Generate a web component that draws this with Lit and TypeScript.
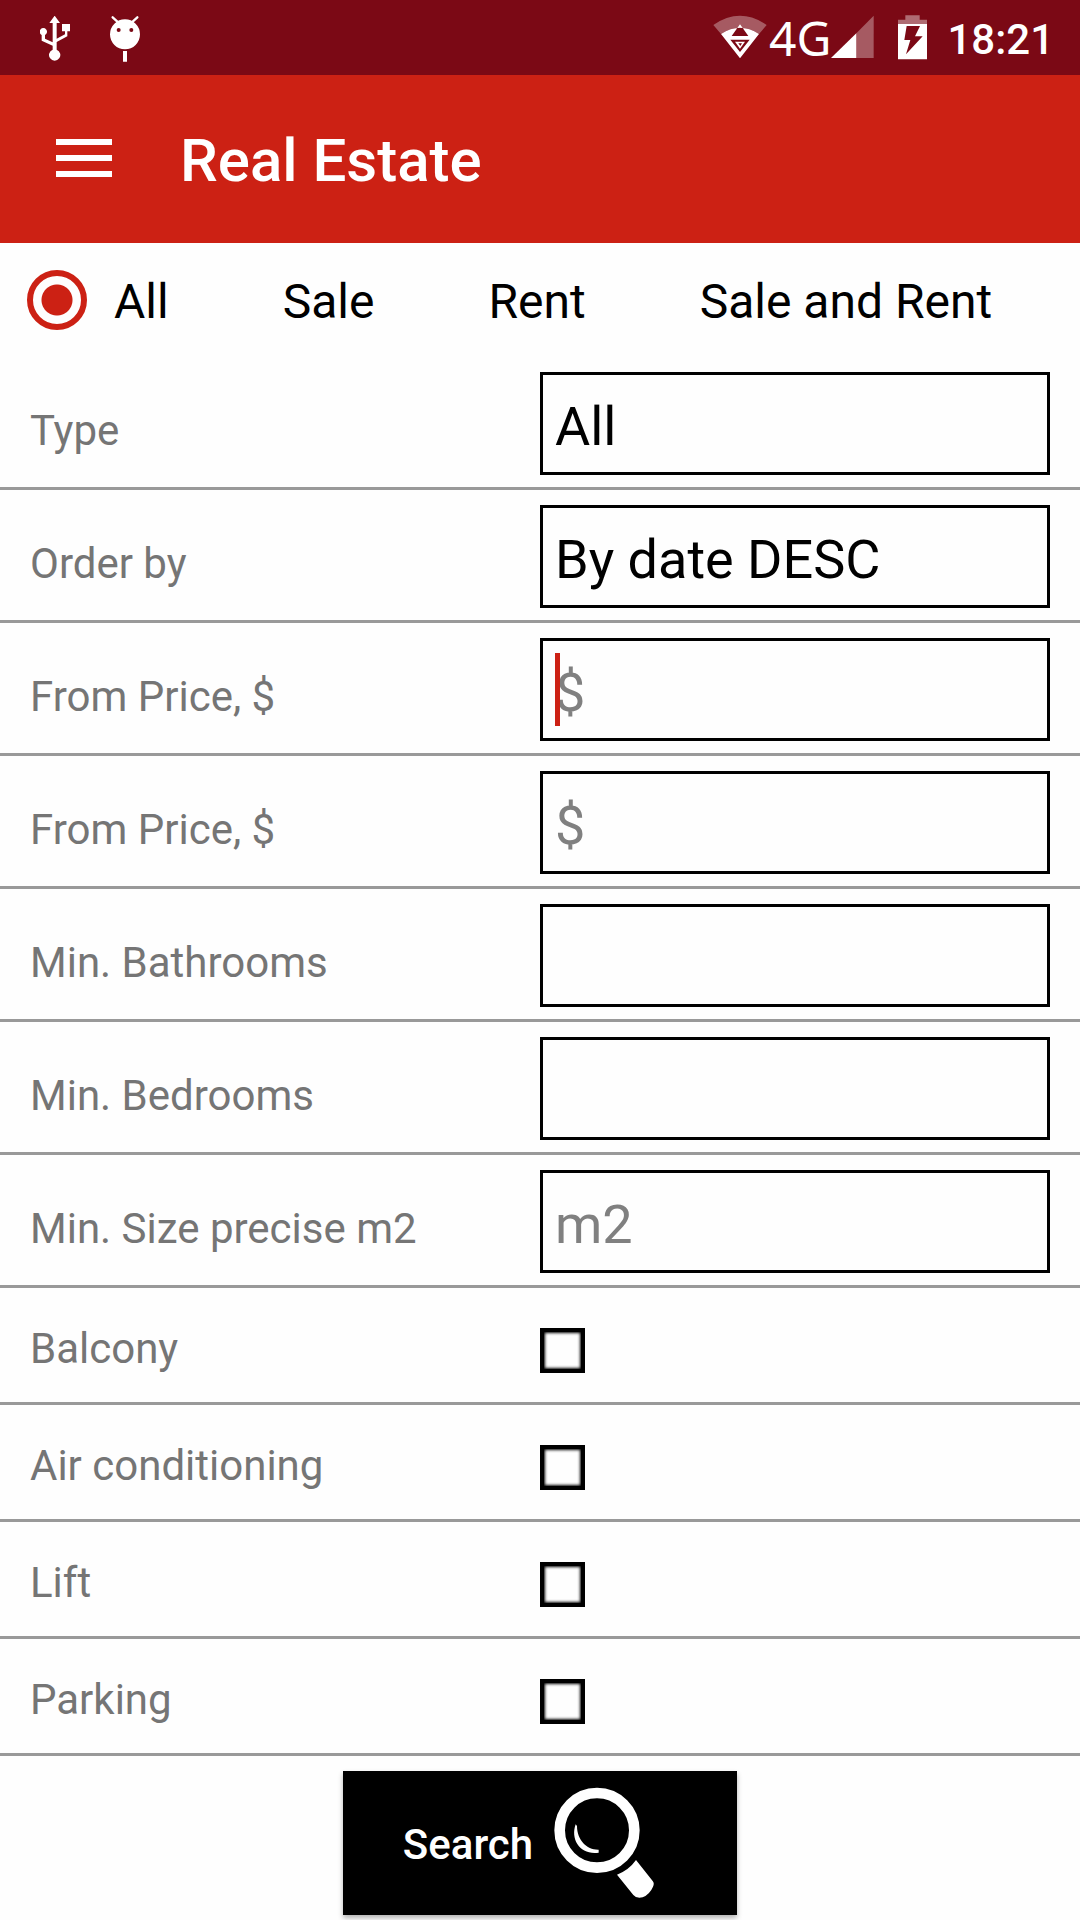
import { LitElement, html, css, nothing } from "lit";
import { customElement } from "lit/decorators.js";

interface Field {
  id: string;
  label: string;
  options?: string[];
  placeholder?: string;
  caret?: boolean;
}

const LISTINGS = ["All", "Sale", "Rent", "Sale and Rent"];

const FIELDS: Field[] = [
  { id: "type", label: "Type", options: ["All"] },
  { id: "order", label: "Order by", options: ["By date DESC"] },
  { id: "price-from", label: "From Price, $", placeholder: "$", caret: true },
  { id: "price-to", label: "From Price, $", placeholder: "$" },
  { id: "bathrooms", label: "Min. Bathrooms" },
  { id: "bedrooms", label: "Min. Bedrooms" },
  { id: "size", label: "Min. Size precise m2", placeholder: "m2" },
];

const AMENITIES = ["Balcony", "Air conditioning", "Lift", "Parking"];

@customElement("status-bar")
class StatusBar extends LitElement {
  static styles = css`
    :host {
      display: flex;
      align-items: center;
      justify-content: space-between;
      height: 75px;
      padding: 0 26px 0 40px;
      background: #7b0915;
      color: #fff;
      font-family: Roboto, sans-serif;
    }
    svg {
      display: block;
      flex: none;
      fill: #fff;
    }
    .group {
      display: flex;
      align-items: center;
    }
    .left {
      gap: 38px;
      padding-top: 2px;
    }
    .network {
      font: 400 48px/60px "Noto Sans", sans-serif;
      margin-left: 2px;
    }
    .battery {
      margin-left: 24px;
    }
    .time {
      margin-left: 20px;
      padding-top: 4px;
      font-size: 42px;
      font-weight: 500;
      line-height: 50px;
    }
  `;

  render() {
    return html`
      <div class="group left">
        <svg width="31" height="45" viewBox="121 48 93 135" aria-label="USB">
          <path d="M165 47l16 22h-10v47l25-13v-9h-9V72h24v22h-8v15l-32 17v23a17 17 0 1 1-12 0v-12l-33-15v-17a11 11 0 1 1 10 0v11l23 11V69h-10z" />
        </svg>
        <svg width="32" height="46" viewBox="330 46 96 138" aria-label="Debugging">
          <path d="M341 50l14 13M415 50l-14 13" fill="none" stroke="#fff" stroke-width="7" stroke-linecap="round" />
          <path fill-rule="evenodd" d="M378 56a45 45 0 1 0 0 90a45 45 0 1 0 0-90zM359 82a6 6 0 1 1 0 12a6 6 0 1 1 0-12zM397 82a6 6 0 1 1 0 12a6 6 0 1 1 0-12zM372 151h12v32h-12z" />
        </svg>
      </div>
      <div class="group">
        <svg width="54" height="45" viewBox="41 43 162 135" aria-label="Wi-Fi">
          <path opacity=".33" d="M42 73Q122 18 202 73L179 100Q122 62 65 100z" />
          <path fill-rule="evenodd" d="M65 100Q122 62 179 100L122 173zM122 71L97 106H147zM93 117H151L122 154z" />
          <path d="M107 123h30l-15 21z" />
          <path fill="#7b0915" d="M117 128h11l-5 8z" />
        </svg>
        <span class="network">4G</span>
        <svg width="43" height="45" viewBox="395 41 129 135" aria-label="Signal">
          <path opacity=".33" d="M471 96L523 43V170H471z" />
          <path d="M395 170L471 96V170z" />
        </svg>
        <svg class="battery" width="29" height="45" viewBox="597 44 87 135" aria-label="Charging">
          <path opacity=".4" d="M597 71V58h22V45h43v13h22v13z" />
          <path fill-rule="evenodd" d="M597 71h87v106h-87zM623 77L616 119H634L621 162L671 108H648L663 77z" />
        </svg>
        <time class="time">18:21</time>
      </div>
    `;
  }
}

@customElement("app-root")
class AppRoot extends LitElement {
  static styles = css`
    :host {
      display: block;
      background: #fefefe;
      color: #000;
      font-family: Roboto, sans-serif;
    }
    .appbar {
      display: flex;
      align-items: center;
      gap: 68px;
      height: 168px;
      padding: 0 56px;
      background: #cc2114;
      color: #fff;
    }
    .menu {
      display: flex;
      flex-direction: column;
      gap: 10px;
      width: 56px;
      padding: 0 0 2px;
      border: 0;
      background: none;
    }
    .bar {
      height: 6px;
      background: #fff;
    }
    .title {
      margin: 0;
      padding-top: 4px;
      font-size: 60px;
      font-weight: 500;
      line-height: 70px;
    }
    .listings {
      display: flex;
      height: 114px;
      margin: 0;
      padding: 0;
      border: 0;
    }
    .listing {
      display: flex;
      align-items: center;
      font-size: 48px;
      line-height: 56px;
      white-space: nowrap;
    }
    .radio {
      flex: none;
      appearance: none;
      width: 60px;
      height: 60px;
      margin: 0 27px;
      border-radius: 50%;
    }
    .radio:checked {
      border: 6px solid #cc2114;
      background: radial-gradient(circle, #cc2114 15px, transparent 16px);
    }
    .listing-text {
      padding-top: 4px;
    }
    .row {
      display: grid;
      grid-template-columns: 1fr 1fr;
      align-items: start;
      padding: 15px 30px 12px;
      border-bottom: 3px solid #999;
    }
    .label {
      padding-top: 34px;
      color: #757575;
      font-size: 42px;
      line-height: 50px;
    }
    .control {
      display: block;
      position: relative;
    }
    .box {
      display: block;
      appearance: none;
      box-sizing: border-box;
      width: 100%;
      height: 103px;
      margin: 0;
      padding: 6px 12px 0;
      border: 3px solid #000;
      border-radius: 0;
      outline: 0;
      background: transparent;
      color: #000;
      font: 400 54px/64px Roboto, sans-serif;
    }
    .box::placeholder {
      color: #808080;
      opacity: 1;
    }
    .caret {
      position: absolute;
      top: 15px;
      left: 15px;
      width: 5px;
      height: 73px;
      background: #cc2114;
    }
    .check-row {
      padding: 36px 30px 28px;
    }
    .check-row .label {
      padding-top: 0;
    }
    .check {
      appearance: none;
      box-sizing: border-box;
      width: 45px;
      height: 45px;
      margin: 4px 0 0;
      border: 4px solid #000;
      box-shadow: inset 0 0 3px 1px #000;
    }
    .actions {
      display: flex;
      justify-content: center;
      padding: 15px 0 5px;
    }
    .search {
      display: flex;
      align-items: center;
      gap: 20px;
      height: 144px;
      padding: 0 82px 0 60px;
      border: 0;
      background: #000;
      color: #fff;
      font: 500 42px/50px Roboto, sans-serif;
      box-shadow: 0 3px 5px rgba(0, 0, 0, 0.3);
    }
    .search-text {
      padding-top: 4px;
    }
    .lens {
      display: block;
      flex: none;
    }
  `;

  private renderField(f: Field) {
    return html`
      <div class="row">
        <label class="label" for=${f.id}>${f.label}</label>
        <div class="control">
          ${f.caret ? html`<span class="caret"></span>` : nothing}
          ${f.options
            ? html`<select class="box" id=${f.id}>
                ${f.options.map((o) => html`<option>${o}</option>`)}
              </select>`
            : html`<input class="box" id=${f.id} type="text" placeholder=${f.placeholder ?? nothing} />`}
        </div>
      </div>
    `;
  }

  render() {
    return html`
      <status-bar></status-bar>
      <header class="appbar">
        <button class="menu" aria-label="Menu">
          <span class="bar"></span><span class="bar"></span><span class="bar"></span>
        </button>
        <h1 class="title">Real Estate</h1>
      </header>
      <form>
        <fieldset class="listings" aria-label="Listing">
          ${LISTINGS.map(
            (name, i) => html`
              <label class="listing">
                <input class="radio" type="radio" name="listing" ?checked=${i === 0} />
                <span class="listing-text">${name}</span>
              </label>
            `
          )}
        </fieldset>
        ${FIELDS.map((f) => this.renderField(f))}
        ${AMENITIES.map(
          (name, i) => html`
            <div class="row check-row">
              <label class="label" for="amenity-${i}">${name}</label>
              <input class="check" id="amenity-${i}" type="checkbox" />
            </div>
          `
        )}
        <div class="actions">
          <button class="search" type="button">
            <span class="search-text">Search</span>
            <svg class="lens" width="102" height="112" viewBox="669 141 306 336" aria-hidden="true">
              <circle cx="801" cy="271" r="112" fill="none" stroke="#fff" stroke-width="32" />
              <path fill="#fff" d="M737 253C720 300 752 346 806 338V329C770 330 741 300 741 258z" />
              <path fill="#fff" d="M861 404Q897 390 918 360L968 423Q974 430 969 440Q960 462 938 472Q920 477 910 465z" />
            </svg>
          </button>
        </div>
      </form>
    `;
  }
}
